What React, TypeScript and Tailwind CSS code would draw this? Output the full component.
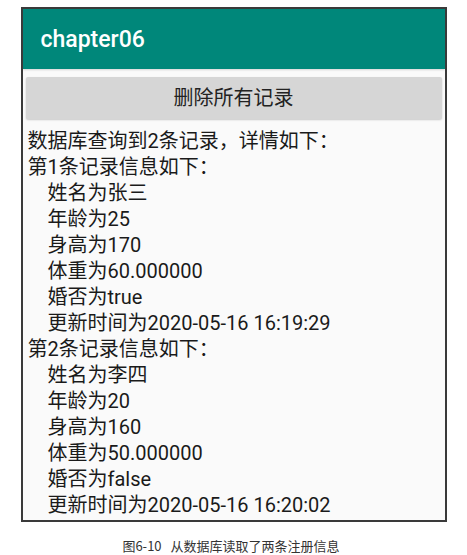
const record1 = ["姓名为张三", "年龄为25", "身高为170", "体重为60.000000", "婚否为true", "更新时间为2020-05-16 16:19:29"]
const record2 = ["姓名为李四", "年龄为20", "身高为160", "体重为50.000000", "婚否为false", "更新时间为2020-05-16 16:20:02"]

const RecordBlock = ({ index, lines }: { index: number; lines: string[] }) => (
  <>
    <div>第{index}条记录信息如下：</div>
    {lines.map((line) => (
      <div key={line} className="pl-[20px]">
        {line}
      </div>
    ))}
  </>
)

export default function App() {
  return (
    <div className="w-[467px] h-[555px] bg-white flex flex-col items-center pt-[7px] font-['Roboto','Noto_Sans_CJK_SC',sans-serif]">
      {/* Phone screen */}
      <div className="w-[426px] h-[515px] border-2 border-[#3a3a3a] bg-[#fafafa] flex flex-col overflow-hidden">
        <div className="h-[60px] bg-[#00877a] flex items-center pl-[18px] shadow-[0_1px_2px_rgba(0,0,0,0.15)]">
          <span className="text-white text-[23px] font-medium leading-none">chapter06</span>
        </div>

        <div className="px-[3px] pt-[8px]">
          <button className="w-full h-[42px] bg-[#d6d6d6] rounded-[2px] text-[20px] text-[#222] shadow-[0_1px_2px_rgba(0,0,0,0.2)]">
            删除所有记录
          </button>
        </div>

        <div className="pl-[5px] pt-[9px] text-[20px] leading-[26px] text-[#1a1a1a]">
          <div>数据库查询到2条记录，详情如下：</div>
          <RecordBlock index={1} lines={record1} />
          <RecordBlock index={2} lines={record2} />
        </div>
      </div>

      <div className="mt-[17px] text-[13px] leading-none text-[#333] font-['Noto_Sans_CJK_SC',sans-serif] -ml-[5px]">
        图6-10<span className="ml-[9px]">从数据库读取了两条注册信息</span>
      </div>
    </div>
  )
}
